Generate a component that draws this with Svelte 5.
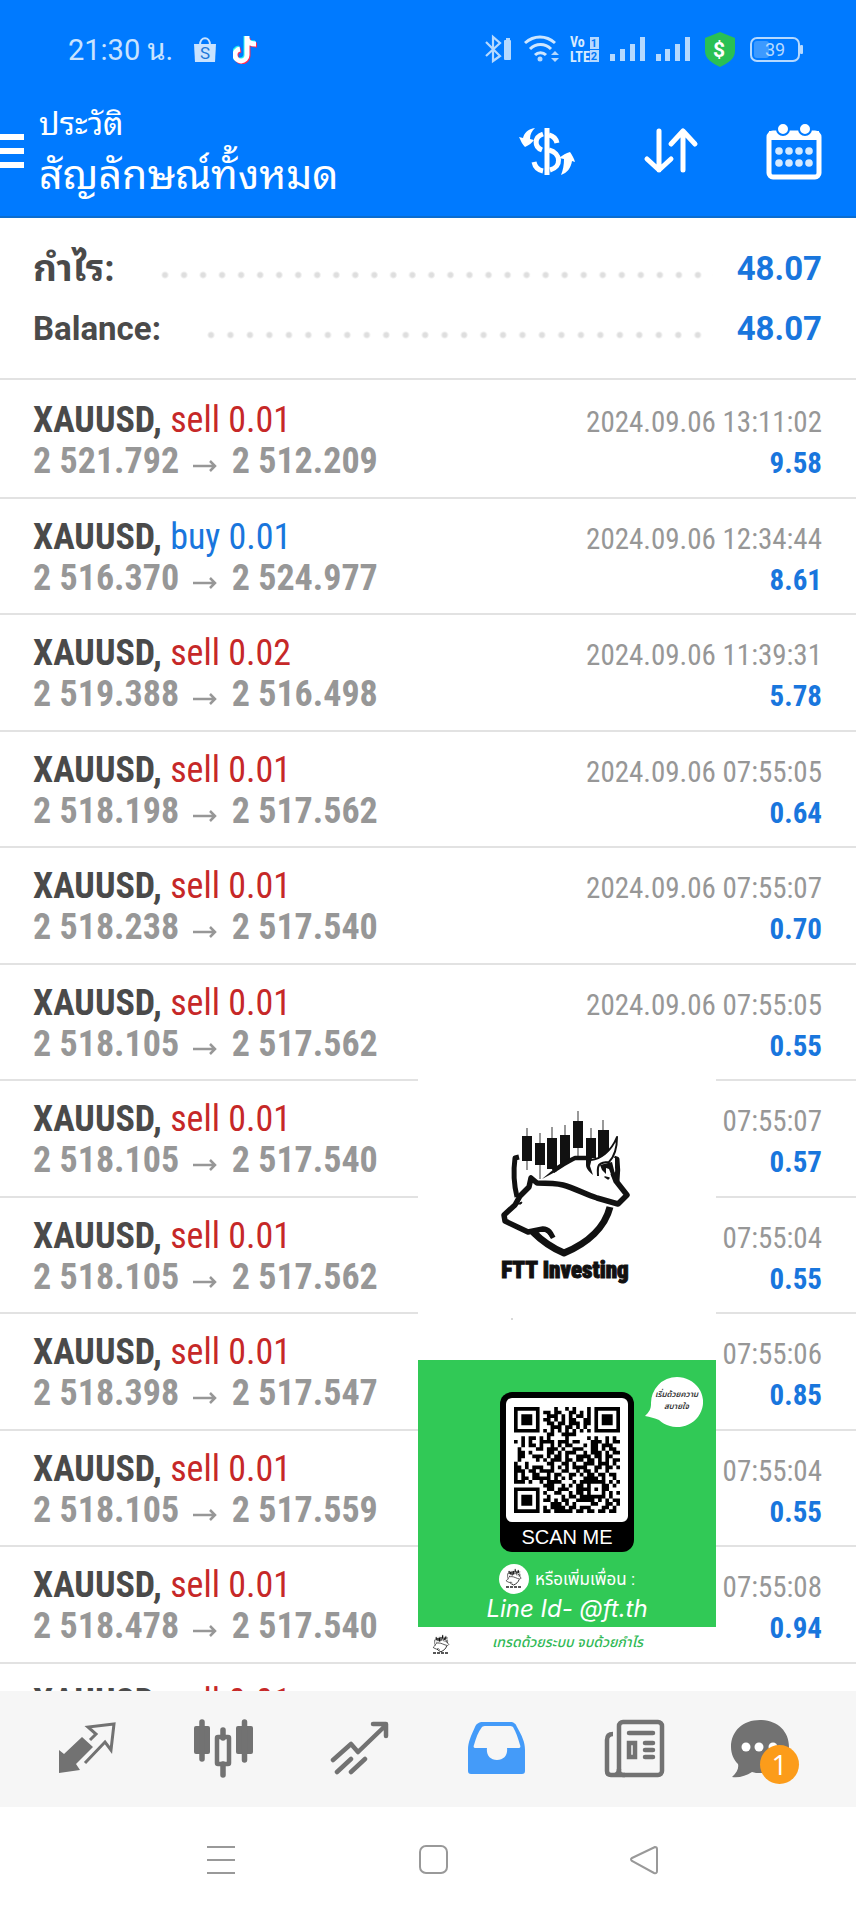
<script>
  const deals = [
    ['sell', '0.01', '2 521.792', '2 512.209', '2024.09.06 13:11:02', '9.58'],
    ['buy', '0.01', '2 516.370', '2 524.977', '2024.09.06 12:34:44', '8.61'],
    ['sell', '0.02', '2 519.388', '2 516.498', '2024.09.06 11:39:31', '5.78'],
    ['sell', '0.01', '2 518.198', '2 517.562', '2024.09.06 07:55:05', '0.64'],
    ['sell', '0.01', '2 518.238', '2 517.540', '2024.09.06 07:55:07', '0.70'],
    ['sell', '0.01', '2 518.105', '2 517.562', '2024.09.06 07:55:05', '0.55'],
    ['sell', '0.01', '2 518.105', '2 517.540', '07:55:07', '0.57'],
    ['sell', '0.01', '2 518.105', '2 517.562', '07:55:04', '0.55'],
    ['sell', '0.01', '2 518.398', '2 517.547', '07:55:06', '0.85'],
    ['sell', '0.01', '2 518.105', '2 517.559', '07:55:04', '0.55'],
    ['sell', '0.01', '2 518.478', '2 517.540', '07:55:08', '0.94'],
    ['sell', '0.01', '', '', '', '']
  ];

  const qr = [
    '#######....#..#.#...#.#######',
    '#.....#.##.##..##.#.#.#.....#',
    '#.###.#..###.#.#.##.#.#.###.#',
    '#.###.#.##.#.#.##..##.#.###.#',
    '#.###.#..##.##.###.##.#.###.#',
    '#.....#...###.##.#.#..#.....#',
    '#######.#.#.#.#.#.#.#.#######',
    '.........##..####............',
    '..#.##.#.#....#.....#.#..#.#.',
    '#.#.#..####.###.##...###.#.##',
    '..#.##.#..#.#.##...#.##.###..',
    '.#....##.###.#..###..##.#.##.',
    '.##.#....##.#.###..#.###.#.##',
    '.##..###.#.##.#..####.##.##..',
    '.#....#.#.###.##.##.##.#.#.##',
    '#..#.....##..##.#..###.###.#.',
    '##.#.###..#.#.#.####..##.##.#',
    '###.##.####..##..#.##.#..#...',
    '#.#..##..#.##..##.#.##.##.##.',
    '#.##.#####.#.#.#...####.#..#.',
    '###.#..#.####...#.#######.#.#',
    '........###..#.#.##.#...##.#.',
    '#######..##.###..####.#.##...',
    '#.....#.#..##..#.##.#...#.#.#',
    '#.###.#..#...#.##.#######.#..',
    '#.###.#.##.#.##..#####.#.#.##',
    '#.###.#...###.#.#....##..##.#',
    '#.....#.#.####.##.###...##.#.',
    '#######.##.#####.##.##.##.##.'
  ];
  const qrPath = qr
    .map((row, y) => [...row].map((c, x) => (c === '#' ? `M${x} ${y}h1v1h-1z` : '')).join(''))
    .join('');
</script>

{#snippet emblem()}
  <g fill="#111" stroke="#111" stroke-linejoin="round">
    <path d="M26 17v42M39 22v46M51 16v40M64 14v40M77 0v46M90 17v30M102 9v30" fill="none" stroke="#555" stroke-width="1.200" />
    <path stroke="none" d="M21 25h10v25h-10zM34 32h10v22h-10zM46 27h10v31h-10zM59 24h10v26l-10 6zM72 10h10v27h-10zM85 27h10v20h-10zM97 19h11v22l-11 8z" />
    <path fill="none" stroke-width="5" d="M18 46l-4 1c-2 15-1 27 2 39M113 47l3 1c1 8 1 14 0 22" />
    <path fill="#fff" stroke="none" d="M41 68C55 58 64 51 74 47h40l0 22 12 15-9 9-22-6-33-13z" />
    <path fill="none" stroke-width="4.500" d="M52 60c8-5 15-10 22-13h14" />
    <path stroke="none" d="M41 68l12-10 3 2z" />
    <path stroke="none" d="M85 46l6 1-2 8 3 9c-4-3-7-7-7-10z" />
    <path fill="#fff" stroke-width="2" d="M90 49c9-1 20-8 26-23 0 10-3 20-8 25-5 0-8 1-10 3-2 3-1 6-1 11" />
    <path stroke="none" d="M99 54l12-3 5 20-5-5-3-8-3-1 0 6-4-4z" />
    <path d="M104 66l4 1-1 1z" stroke-width="1.500" />
    <path fill="none" stroke-width="5.500" d="M112 62l3 8 11 14-9 9-21-6C84 83 73 77 62 74c-8-2-17-2-26-2l-6-5-2 9-9 9-5 9-11 10 1 6 23 11 15-3c6 0 8 5 10 9" />
    <path fill="none" stroke-width="7" d="M109 96c-5 20-22 36-46 46-12-5-22-12-31-21" />
    <path d="M16 93l5-2-1 2z" />
    <path fill="#fff" stroke="none" d="M38 121l5 0c4 2 6 5 8 9z" />
  </g>
{/snippet}

<div class="phone">
  <header>
    <div class="status">
      <span class="clock">21:30 น.</span>
      <svg class="shop" width="24" height="26" viewBox="0 0 24 26" aria-hidden="true">
        <path d="M1 7h22l-1 18H2z" fill="#c9e3ff" />
        <path d="M7 8c0-9 10-9 10 0" fill="none" stroke="#c9e3ff" stroke-width="2" />
        <text x="12" y="22" text-anchor="middle" font-size="17" fill="#1c78d8">S</text>
      </svg>
      <svg width="26" height="28" viewBox="0 0 26 28" aria-hidden="true">
        <g fill="none" stroke-width="5">
          <path d="M14 1v18a6 6 0 1 1-7-6M14 2c0 4 4 6 9 6" stroke="#25f4ee" transform="translate(-1 -1)" />
          <path d="M14 1v18a6 6 0 1 1-7-6M14 2c0 4 4 6 9 6" stroke="#fe2c55" transform="translate(1 1)" />
          <path d="M14 0v19a6 6 0 1 1-7-6M14 2c0 4 4 6 9 6" stroke="#fff" />
        </g>
      </svg>
      <svg class="signals" width="320" height="36" viewBox="484 32 320 36" role="img" aria-label="Connections and battery">
        <g fill="none" stroke="#b5d9ff" stroke-width="2.200">
          <path d="M486 42l14 14-7 5V37l7 6-14 13" />
          <path d="M525 43c9-8 21-8 30 0M530 49c6-6 15-6 21 0M535 55c3-3 8-3 11 0" stroke-width="3" stroke="#cde6ff" />
          <rect x="751" y="38" width="48" height="23" rx="6" stroke-width="2" />
        </g>
        <g fill="#b5d9ff">
          <rect x="504" y="40" width="7" height="20" rx="1" /><rect x="506" y="38" width="4" height="3" />
          <circle cx="540" cy="59" r="2.500" />
          <path d="M551 55l4-4 4 4zM551 58l4 4 4-4z" />
          <path d="M590 37h9v12h-9zM590 50h9v12h-9z" />
          <path d="M610 54h5v7h-5zM620 49h5v12h-5zM630 44h5v17h-5zM640 37h5v24h-5zM656 54h5v7h-5zM665 49h5v12h-5zM675 44h5v17h-5zM685 37h5v24h-5z" />
          <rect x="800" y="45" width="3" height="9" rx="1" />
          <rect x="754" y="41" width="15" height="17" rx="3" fill="#3d9aff" />
        </g>
        <path d="M720 32l15 6v13c0 8-7 12-15 16-8-4-15-8-15-16V38z" fill="#2ac054" />
        <text class="b" x="719" y="57" text-anchor="middle" font-size="21" fill="#fff">$</text>
        <text class="c b" x="570" y="47" font-size="14" fill="#d7ebff">Vo</text>
        <text class="c b" x="570" y="62" font-size="14" fill="#d7ebff">LTE</text>
        <text class="b" x="594" y="47" text-anchor="middle" font-size="11" fill="#0078f8">1</text>
        <text class="b" x="594" y="60" text-anchor="middle" font-size="11" fill="#0078f8">2</text>
        <text x="775" y="56" text-anchor="middle" font-size="18" fill="#b5d9ff">39</text>
      </svg>
    </div>
    <div class="bar">
      <button class="menu" aria-label="Menu">
        <svg width="24" height="36" viewBox="0 0 24 36"><path d="M0 1h24v6H0zM0 15h24v6H0zM0 29h24v6H0z" fill="#fff" /></svg>
      </button>
      <div class="titles">
        <p>ประวัติ</p>
        <h1>สัญลักษณ์ทั้งหมด</h1>
      </div>
      <div class="tools">
        <button aria-label="Currency">
          <svg width="58" height="58" viewBox="0 0 58 58">
            <g fill="none" stroke="#fff">
              <path d="M29 6v47" stroke-width="5" />
              <path d="M39 21c-1-5-4-7-8-8M25 12c-9 3-9 13-1 16M31 28c12 3 13 17 1 20M25 49c-5-1-8-4-9-9" stroke-width="5" />
            </g>
            <path d="M17 6C10 7 6 11 5 16l-4-1c2 4 3 7 6 10 4-2 7-4 9-7l-4-1c0-5 2-8 5-11zM43 53c6-2 10-7 11-14l3 1c-1-4-3-7-5-10-4 1-7 3-11 6l5 1c0 6-1 11-3 16z" fill="#fff" />
          </svg>
        </button>
        <button aria-label="Sort">
          <svg width="56" height="48" viewBox="0 0 56 48"><path d="M16 4v39M4 32l12 11 12-11M40 43V4M28 17L40 4l12 13" fill="none" stroke="#fff" stroke-width="5" stroke-linecap="round" stroke-linejoin="round" /></svg>
        </button>
        <button aria-label="Calendar">
          <svg width="56" height="58" viewBox="0 0 56 58">
            <rect x="3" y="11" width="50" height="44" rx="4" fill="none" stroke="#fff" stroke-width="5" />
            <path d="M3 9h50v9H3z" fill="#fff" />
            <g fill="#fff" stroke="#007aff" stroke-width="2"><circle cx="17" cy="7" r="6" /><circle cx="39" cy="7" r="6" /></g>
            <g fill="#d5eaff">
              {#each [29, 41] as y}{#each [13, 23, 33, 43] as x}<circle cx={x} cy={y} r="3.800" />{/each}{/each}
            </g>
          </svg>
        </button>
      </div>
    </div>
  </header>

  <dl class="summary">
    <div><dt lang="th">กำไร:</dt><dd class="dots" aria-hidden="true"></dd><dd>48.07</dd></div>
    <div><dt>Balance:</dt><dd class="dots" aria-hidden="true"></dd><dd>48.07</dd></div>
  </dl>

  <main>
    <ul>
      {#each deals as [side, volume, open, close, time, profit]}
        <li>
          <div class="deal">
            <p><b>XAUUSD,</b> <span class={side}>{side} {volume}</span></p>
            {#if open}<p class="prices">{open} <span class="arrow"><svg width="24" height="14" viewBox="0 0 24 14" role="img" aria-label="to"><path d="M0 7h22M17 2l5 5-5 5" fill="none" stroke="currentColor" stroke-width="2.500" /></svg></span> {close}</p>{/if}
          </div>
          {#if time}
            <div class="result">
              <p class="time">{time}</p>
              <p class="profit">{profit}</p>
            </div>
          {/if}
        </li>
      {/each}
    </ul>

    <aside>
      <svg class="logo" width="298" height="288" viewBox="0 0 298 288" role="img" aria-label="FTT Investing">
        <g transform="translate(83 39)">{@render emblem()}</g>
        <text class="c heavy" x="147" y="206" text-anchor="middle" font-size="23" fill="#111" stroke="#111">FTT Investing</text>
        <circle cx="94" cy="247" r="1" fill="#ccc" />
      </svg>
      <section>
        <div class="bubble">
          <svg width="58" height="54" viewBox="0 0 58 54" aria-hidden="true"><path d="M32 1a26 25 0 1 1-18 43C10 42 5 41 0 40c4-4 6-7 6-12A26 26 0 0 1 32 1z" fill="#fff" /></svg>
          <p>เริ่มด้วยความ<br />สบายใจ</p>
        </div>
        <div class="scan">
          <div class="code"><svg width="106" height="106" viewBox="0 0 29 29" role="img" aria-label="QR code"><path d={qrPath} fill="#000" /></svg></div>
          <strong>SCAN ME</strong>
        </div>
        <p class="add">
          <svg width="30" height="30" viewBox="0 0 30 30" aria-hidden="true">
            <circle cx="15" cy="15" r="15" fill="#fff" />
            <g transform="translate(7 4) scale(.12)">{@render emblem()}</g>
            <path d="M7 23h16" stroke="#222" stroke-width="1.500" stroke-dasharray="3 1" />
          </svg>
          หรือเพิ่มเพื่อน :
        </p>
        <p class="line">Line Id- @ft.th</p>
      </section>
      <footer>
        <svg width="18" height="22" viewBox="0 0 18 22" aria-hidden="true">
          <g transform="translate(1 1) scale(.125)">{@render emblem()}</g>
          <path d="M1 20h16" stroke="#222" stroke-width="1.500" stroke-dasharray="3 1" />
        </svg>
        <span>เทรดด้วยระบบ จบด้วยกำไร</span>
      </footer>
    </aside>
  </main>

  <nav class="tabs" aria-label="Sections">
    <button aria-label="Quotes">
      <svg width="60" height="60" viewBox="0 0 60 60">
        <path d="M1 31l5 4 18-17 11 10-17 17 4 6-21 3z" fill="#727272" />
        <path d="M32 21l6-6-8-7 26-3-3 26-6-8-20 21" fill="none" stroke="#727272" stroke-width="3" />
      </svg>
    </button>
    <button aria-label="Charts">
      <svg width="60" height="60" viewBox="1 0 60 60">
        <g fill="#727272"><rect x="1" y="7" width="16" height="28" rx="2" /><rect x="43" y="7" width="17" height="28" rx="2" /></g>
        <path d="M9 3v37M51.500 3v38M30 11v8M30 45v11" stroke="#727272" stroke-width="5.500" stroke-linecap="round" />
        <rect x="24" y="18" width="12" height="27" rx="1" fill="none" stroke="#727272" stroke-width="4.500" />
      </svg>
    </button>
    <button aria-label="Trade">
      <svg width="60" height="60" viewBox="1 0 60 60"><path d="M4 41l18-16 7 8L55 8M44 5h13v12M8 53l14-13M22 53l14-13" fill="none" stroke="#727272" stroke-width="4.500" stroke-linecap="round" stroke-linejoin="round" /></svg>
    </button>
    <button aria-label="History" aria-current="page">
      <svg width="60" height="60" viewBox="0 0 60 60"><path fill-rule="evenodd" fill="#449bf9" d="M17 3h27c4 0 6 2 7 5 5 9 8 15 8 23v21c0 2-1 3-3 3H5c-2 0-3-1-3-3V31c0-8 3-14 7-23 1-3 4-5 8-5zM16 8c-4 5-6 11-8 18-1 2 0 3 2 3h11c-1 7 3 12 10 12s11-5 10-12h11c2 0 3-1 2-3-2-7-4-13-7-18-1-1-2-1-4-1H20c-2 0-3 0-4 1z" /></svg>
    </button>
    <button aria-label="News">
      <svg class="spill" width="60" height="60" viewBox="0 0 60 60">
        <g fill="none" stroke="#727272" stroke-width="4.500" stroke-linecap="round">
          <rect x="17" y="3" width="43" height="53" rx="4" />
          <path d="M11 15q-6 0-6 6v31q0 4 4 4h14M17 50q0 5-4 6" stroke-linecap="butt" />
          <path d="M27 14h24M43 24h8M43 31h8M43 38h8" />
          <rect x="27" y="24" width="6" height="14" />
        </g>
      </svg>
    </button>
    <button aria-label="Messages">
      <svg class="spill" width="60" height="60" viewBox="7 0 60 60">
        <path fill="#727272" d="M29 1c17 0 29 11 29 27S45 54 29 54c-3 0-5 0-8-1-6 4-13 6-20 5 5-4 7-9 6-13C3 41 0 35 0 28 0 12 12 1 29 1z" />
        <g fill="#fff"><circle cx="15" cy="28" r="4.500" /><circle cx="28" cy="28" r="4.500" /><circle cx="42" cy="28" r="4.500" /></g>
      </svg>
      <span class="badge">1</span>
    </button>
  </nav>

  <nav class="system" aria-label="System">
    <button aria-label="Recent apps"><svg width="30" height="30" viewBox="0 0 30 30"><path d="M1 2h28M1 15h28M1 28h28" stroke="#999" stroke-width="2" /></svg></button>
    <button aria-label="Home"><svg width="30" height="30" viewBox="0 0 30 30"><rect x="2" y="1" width="27" height="27" rx="6" fill="none" stroke="#999" stroke-width="2" /></svg></button>
    <button aria-label="Back"><svg width="30" height="30" viewBox="0 0 30 30"><path d="M26 2L3 13q-2 1 0 3l22 12q3 1 3-2V4q0-2-2-2z" fill="none" stroke="#999" stroke-width="2" /></svg></button>
  </nav>
</div>

<style>
  :global(body) { margin: 0; background: #fff; }
  p, h1, ul, dl, dd { margin: 0; padding: 0; font-weight: 400; }
  button { border: 0; padding: 0; background: none; position: relative; display: grid; place-items: center; }
  svg { display: block; flex: none; }
  .phone {
    display: flex; flex-direction: column; height: 100vh; overflow: hidden;
    font-family: Roboto, "Noto Sans", "Noto Sans Thai", sans-serif; color: #4a4a4a;
  }
  .b { font-weight: 700; }
  .c, main li { font-family: "Roboto Condensed", "Liberation Sans Narrow", Roboto, sans-serif; }
  .heavy { font-weight: 900; }

  header { background: #007aff; color: #fff; border-bottom: 2px solid #0b6dd0; }
  .status { display: flex; align-items: center; height: 100px; padding: 0 52px 0 68px; }
  .clock { font-size: 29px; line-height: 34px; color: #c9e3ff; margin-right: 20px; }
  .clock, .titles, dt { font-family: Roboto, "Noto Sans Thai Looped", "Noto Looped Thai", Loma, Waree, "Noto Sans Thai", sans-serif; }
  .shop { margin-right: 16px; }
  .signals { margin-left: auto; }
  .bar { display: flex; align-items: center; height: 102px; padding: 0 34px 14px 0; }
  .menu { margin-right: 15px; }
  .titles { flex: 1; }
  .titles p { font-size: 32px; line-height: 48px; }
  h1 { font-size: 41px; line-height: 54px; }
  .tools { display: flex; align-items: center; gap: 67px; }

  .summary { padding: 21px 34px 19px 33px; border-bottom: 2px solid #e2e2e2; font-size: 33px; line-height: 60px; }
  .summary div { display: flex; align-items: center; height: 60px; }
  dt { font-weight: 700; margin-right: 46px; }
  dt:lang(th) { font-size: 37px; }
  dd { font-weight: 700; color: #1976dd; }
  dd.dots {
    flex: 1; height: 8px; margin: 12px 24px 0 0;
    background: radial-gradient(circle at 4px 4px, #dedede 2px, transparent 4px) 0 0 / 19px 8px space no-repeat;
  }

  main { position: relative; flex: 1; min-height: 0; overflow: hidden; }
  ul { list-style: none; padding-top: 2px; }
  li { display: flex; align-items: flex-start; justify-content: space-between; padding: 18px 34px 13px 33px; border-bottom: 2px solid #e2e2e2; line-height: 41px; white-space: nowrap; }
  li:nth-child(even) { padding-bottom: 12px; }
  .deal { font-size: 36px; }
  .sell { color: #c62828; }
  .buy { color: #1976dd; }
  .prices { font-weight: 700; color: #979797; }
  .arrow { display: inline-block; padding: 0 6px; }
  .result { padding-top: 2px; font-size: 29px; text-align: right; }
  .time { color: #979797; }
  .profit { font-weight: 700; color: #1976dd; }

  aside { position: absolute; right: 140px; bottom: 30px; width: 298px; background: #fff; }
  section { position: relative; display: flex; flex-direction: column; align-items: center; padding-top: 32px; height: 235px; background: #31c956; color: #fff; }
  .scan { display: flex; flex-direction: column; align-items: center; padding: 6px 6px 0; border-radius: 12px; background: #000; }
  .code { padding: 9px 8px; border-radius: 6px; background: #fff; }
  strong { font: 400 20px/30px "Liberation Sans", sans-serif; }
  .add { display: flex; align-items: center; gap: 6px; margin-top: 11px; font-size: 17px; line-height: 32px; }
  .line { font: italic 400 24px/28px Inter, sans-serif; }
  .bubble { position: absolute; top: 16px; right: 13px; }
  .bubble p { position: absolute; inset: 13px 0 0 5px; font-size: 8px; line-height: 12px; font-style: italic; font-weight: 600; text-align: center; color: #333; white-space: nowrap; }
  footer { display: flex; align-items: center; height: 34px; padding-left: 14px; color: #31b956; }
  footer span { margin: 0 0 4px 42px; font-size: 14px; font-style: italic; font-weight: 500; white-space: nowrap; }

  .tabs { display: flex; justify-content: space-between; padding: 0 58px; height: 116px; background: #f6f6f6; }
  .spill { overflow: visible; }
  .badge { position: absolute; left: 22px; top: 54px; width: 39px; height: 39px; border-radius: 50%; background: #fc9c1a; color: #fff; font: 28px/39px "Open Sans", sans-serif; text-align: center; }
  .system { display: flex; justify-content: space-between; height: 105px; padding: 0 197px 0 206px; }
</style>
